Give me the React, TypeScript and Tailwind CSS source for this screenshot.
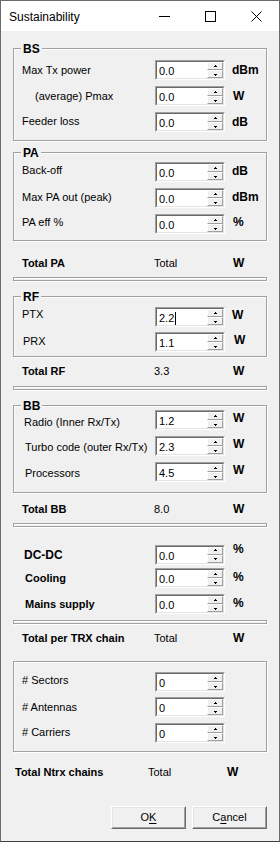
import React from "react";

function Arrow({ up }: { up?: boolean }) {
  return (
    <svg width="5" height="3" viewBox="0 0 5 3" shapeRendering="crispEdges">
      {up ? (
        <>
          <rect x="2" y="0" width="1" height="1" fill="#000" />
          <rect x="1" y="1" width="3" height="1" fill="#000" />
        </>
      ) : (
        <>
          <rect x="1" y="1" width="3" height="1" fill="#000" />
          <rect x="2" y="2" width="1" height="1" fill="#000" />
        </>
      )}
    </svg>
  );
}

function SpinBtn({ up }: { up?: boolean }) {
  return (
    <div className="h-[8px] flex items-center justify-center bg-[#f0f0f0] border border-t-white border-l-white border-r-[#a0a0a0] border-b-[#a0a0a0]">
      <Arrow up={up} />
    </div>
  );
}

function Spin({ value, caret }: { value: string; caret?: boolean }) {
  return (
    <div className="w-[70px] h-[20px] border border-t-[#a0a0a0] border-l-[#a0a0a0] border-r-white border-b-white">
      <div className="w-full h-full border border-t-[#696969] border-l-[#696969] border-r-[#e3e3e3] border-b-[#e3e3e3] bg-white flex">
        <div className="flex-1 pl-[2px] pt-[3px] text-[11px] leading-[13px] text-black flex items-start">
          <span>{value}</span>
          {caret && <span className="w-[1px] h-[13px] bg-black ml-[1px]" />}
        </div>
        <div className="w-[16px] flex flex-col">
          <SpinBtn up />
          <SpinBtn />
        </div>
      </div>
    </div>
  );
}

function Row({
  label,
  value,
  unit,
  lcls = "pl-[8px]",
  ucls = "pl-[7px]",
  cls = "",
  caret,
}: {
  label: string;
  value: string;
  unit?: string;
  lcls?: string;
  ucls?: string;
  cls?: string;
  caret?: boolean;
}) {
  return (
    <div className={`grid grid-cols-[141px_70px_1fr] h-[20px] items-center ${cls}`}>
      <div className={`text-[11px] leading-[13px] whitespace-nowrap ${lcls}`}>{label}</div>
      <Spin value={value} caret={caret} />
      <div className={`text-[12px] leading-[14px] font-bold ${ucls}`}>{unit}</div>
    </div>
  );
}

function Group({ title, children, cls }: { title?: string; children: React.ReactNode; cls: string }) {
  return (
    <div className={`relative border border-[#a0a0a0] shadow-[inset_1px_1px_0_#fff,1px_1px_0_#fff] flex flex-col ${cls}`}>
      {title && (
        <span className="absolute left-[7px] top-[-7px] px-[2px] bg-[#f0f0f0] text-[12px] leading-[14px] font-bold">
          {title}
        </span>
      )}
      {children}
    </div>
  );
}

function Sep({ cls }: { cls: string }) {
  return <div className={`h-[4px] border border-[#a0a0a0] shadow-[inset_1px_1px_0_#fff,1px_1px_0_#fff] ${cls}`} />;
}

function Total({ label, value, cls }: { label: string; value: string; cls: string }) {
  return (
    <div className={`ml-[1px] grid grid-cols-[140px_79px_1fr] h-[20px] items-center text-[11px] leading-[13px] ${cls}`}>
      <div className="pl-[8px] font-bold whitespace-nowrap">{label}</div>
      <div>{value}</div>
      <div className="font-bold text-[12px] leading-[14px]">W</div>
    </div>
  );
}

function WinButton({ children }: { children: React.ReactNode }) {
  return (
    <div className="w-[75px] h-[23px] border border-t-white border-l-white border-r-[#696969] border-b-[#696969] bg-[#f0f0f0]">
      <div className="w-full h-full border border-t-[#e3e3e3] border-l-[#e3e3e3] border-r-[#a0a0a0] border-b-[#a0a0a0] flex items-center justify-center text-[11px] leading-[13px]">
        {children}
      </div>
    </div>
  );
}

export default function App() {
  return (
    <div className="w-[280px] h-[842px] border-x border-t border-[#6b6b6b] border-b border-b-[#404040] bg-[#f0f0f0] flex flex-col font-['Liberation_Sans',Arial,sans-serif] text-black overflow-hidden">
      {/* Title bar */}
      <div className="h-[30px] bg-white flex items-center shrink-0">
        <div className="flex-1 pl-[8px] text-[12px] leading-[14px] pt-[1px]">Sustainability</div>
        <div className="w-[46px] h-full flex items-center justify-center">
          <svg width="11" height="11" viewBox="0 0 11 11" shapeRendering="crispEdges">
            <rect x="0" y="5" width="11" height="1" fill="#000" />
          </svg>
        </div>
        <div className="w-[46px] h-full flex items-center justify-center">
          <svg width="11" height="11" viewBox="0 0 11 11" shapeRendering="crispEdges">
            <rect x="0.5" y="0.5" width="10" height="10" fill="none" stroke="#000" strokeWidth="1" />
          </svg>
        </div>
        <div className="w-[46px] h-full flex items-center justify-center">
          <svg width="11" height="11" viewBox="0 0 11 11">
            <path d="M0.5 0.5 L10.5 10.5 M10.5 0.5 L0.5 10.5" stroke="#000" strokeWidth="1" fill="none" />
          </svg>
        </div>
      </div>

      {/* Body */}
      <div className="flex flex-col pl-[12px] pr-[12px]">
        <Group title="BS" cls="mt-[17px] pt-[11px] pb-[8px] gap-[6px]">
          <Row label="Max Tx power" value="0.0" unit="dBm" />
          <Row label="(average) Pmax" value="0.0" unit="W" lcls="pl-[21px]" ucls="pl-[8px]" />
          <Row label="Feeder loss" value="0.0" unit="dB" lcls="pl-[8px] mb-[2px]" />
        </Group>

        <Group title="PA" cls="mt-[11px] pt-[9px] pb-[6px] gap-[6px]">
          <Row label="Back-off" value="0.0" unit="dB" lcls="pl-[8px] mb-[4px]" ucls="pl-[7px] mb-[3px]" />
          <Row label="Max PA out (peak)" value="0.0" unit="dBm" lcls="pl-[8px] mb-[2px]" ucls="pl-[7px] mb-[3px]" />
          <Row label="PA eff %" value="0.0" unit="%" lcls="pl-[8px] mb-[4px]" ucls="pl-[8px] mb-[4px]" />
        </Group>

        <Total label="Total PA" value="Total" cls="mt-[12px]" />
        <Sep cls="mt-[4px]" />

        <Group title="RF" cls="mt-[15px] pt-[10px] pb-[4px] gap-[5px]">
          <Row label="PTX" value="2.2" unit="W" caret lcls="pl-[8px] mb-[5px]" ucls="pl-[7px] mb-[5px]" />
          <Row label="PRX" value="1.1" unit="W" lcls="pl-[9px] mb-[2px]" ucls="pl-[9px] mb-[5px]" />
        </Group>

        <Total label="Total RF" value="3.3" cls="mt-[4px]" />
        <Sep cls="mt-[5px]" />

        <Group title="BB" cls="mt-[15px] pt-[4px] pb-[10px] gap-[6px]">
          <Row label="Radio (Inner Rx/Tx)" value="1.2" unit="W" lcls="pl-[10px] mt-[4px]" ucls="pl-[8px] mb-[5px]" />
          <Row label="Turbo code (outer Rx/Tx)" value="2.3" unit="W" lcls="pl-[11px] mt-[3px]" ucls="pl-[8px] mb-[5px]" />
          <Row label="Processors" value="4.5" unit="W" lcls="pl-[11px] mt-[3px]" ucls="pl-[8px] mb-[5px]" />
        </Group>

        <Total label="Total BB" value="8.0" cls="mt-[6px]" />
        <Sep cls="mt-[4px]" />

        <div className="ml-[1px] flex flex-col">
          <Row label="DC-DC" value="0.0" unit="%" cls="mt-[15px]" lcls="pl-[10px] font-bold text-[12px] leading-[14px]" ucls="pl-[8px] mb-[11px]" />
          <Row label="Cooling" value="0.0" unit="%" cls="mt-[6px]" lcls="pl-[11px] font-bold" ucls="pl-[8px] mb-[2px]" />
          <Row label="Mains supply" value="0.0" unit="%" cls="mt-[6px]" lcls="pl-[11px] font-bold" ucls="pl-[8px] mb-[2px]" />
        </div>

        <Sep cls="mt-[6px]" />
        <Total label="Total per TRX chain" value="Total" cls="mt-[4px]" />

        <Group cls="mt-[13px] pt-[10px] pb-[8px]">
          <Row label="# Sectors" value="0" lcls="pl-[8px] mb-[4px]" />
          <Row label="# Antennas" value="0" cls="mt-[5px]" lcls="pl-[8px]" />
          <Row label="# Carriers" value="0" cls="mt-[6px]" lcls="pl-[8px] mb-[2px]" />
        </Group>

        <div className="ml-[1px] mt-[10px] grid grid-cols-[134px_79px_1fr] h-[20px] items-center text-[11px] leading-[13px]">
          <div className="pl-[1px] font-bold whitespace-nowrap">Total Ntrx chains</div>
          <div>Total</div>
          <div className="font-bold text-[12px] leading-[14px]">W</div>
        </div>

        <div className="mt-[24px] ml-[98px] flex gap-[6px]">
          <WinButton>
            <span>
              O<span className="underline underline-offset-[2px]">K</span>
            </span>
          </WinButton>
          <WinButton>
            <span>
              C<span className="underline underline-offset-[2px]">a</span>ncel
            </span>
          </WinButton>
        </div>
      </div>
    </div>
  );
}
